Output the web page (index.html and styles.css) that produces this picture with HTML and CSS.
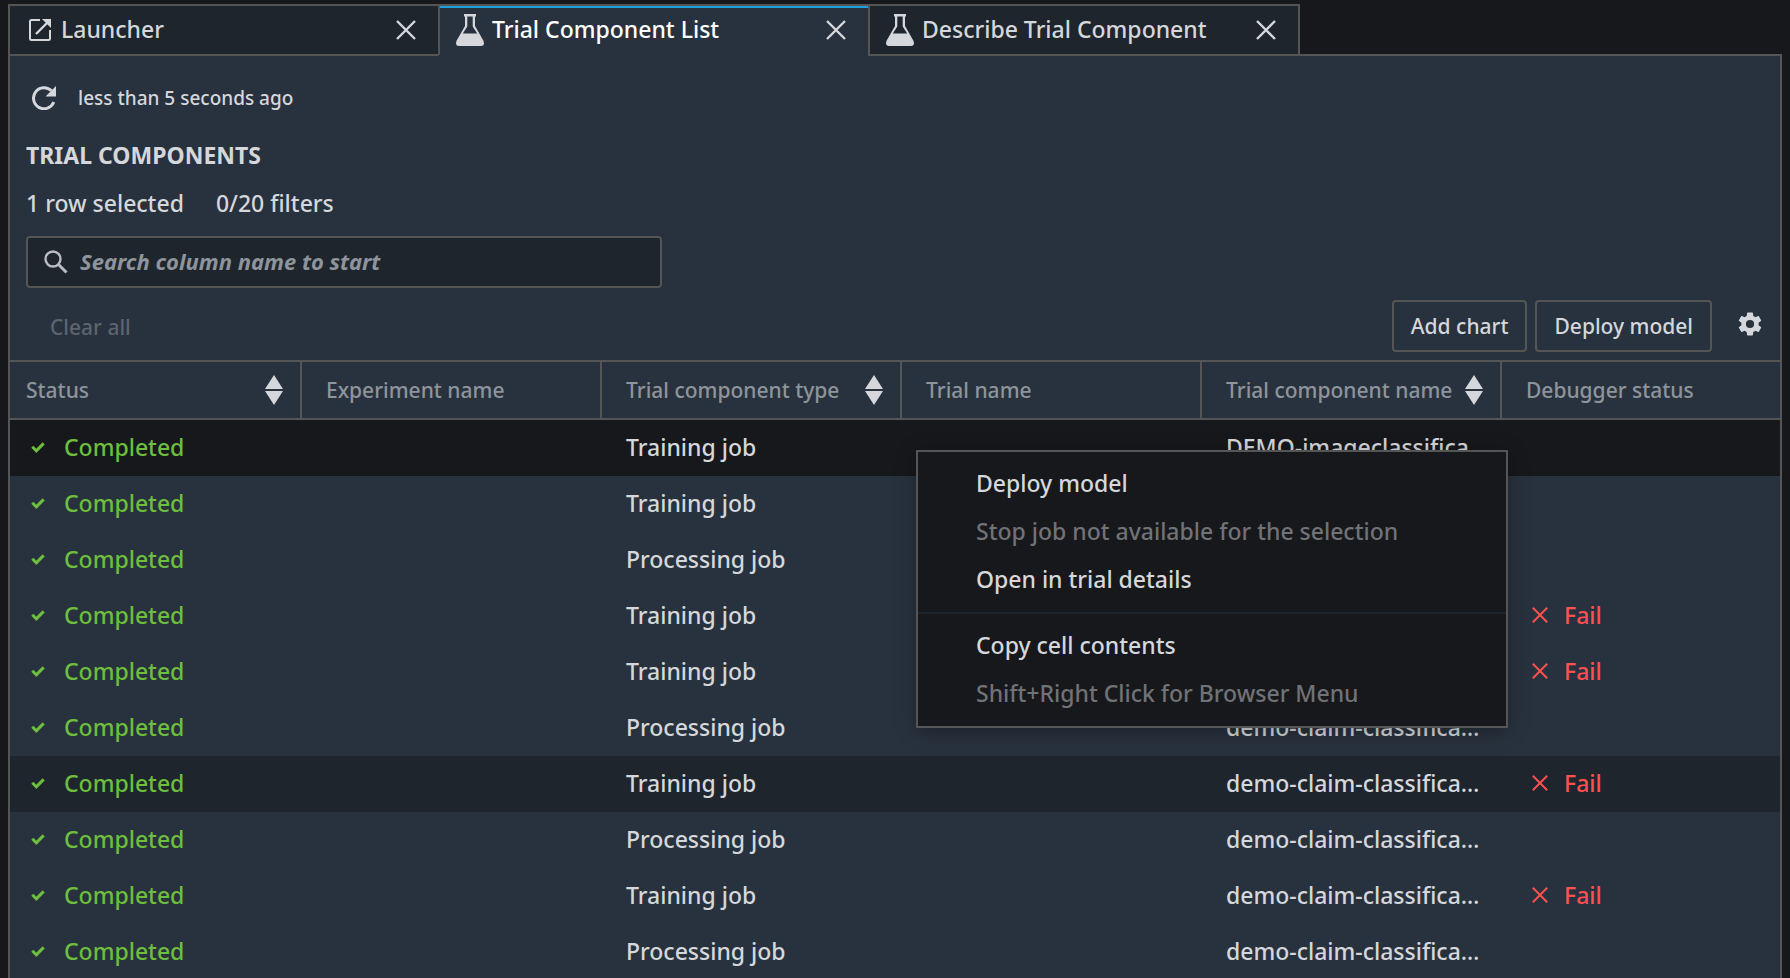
FILE: index.html
```html
<!DOCTYPE html>
<html lang="en">
<head>
<meta charset="utf-8">
<title>Trial Component List</title>
<meta name="viewport" content="width=device-width, initial-scale=1">
<link rel="stylesheet" href="styles.css">
</head>
<body>
<svg class="sprite" aria-hidden="true">
  <symbol id="i-close" viewBox="0 0 20 20"><path d="M1 1l18 18M19 1L1 19" fill="none" stroke="currentColor" stroke-width="2.4"/></symbol>
  <symbol id="i-flask" viewBox="0 0 28 32"><path fill="currentColor" fill-rule="evenodd" d="M8 0h12v2.500h-1V12l8.300 14.500Q28 28 28 29q0 3-3 3H3q-3 0-3-3 0-1 .7-2.500L9 12V2.500H8zM11.300 2.500V12.500L6.800 19.600h14.400l-4.500-7.100V2.500z"/></symbol>
  <symbol id="i-launch" viewBox="0 0 22 22"><path d="M11 1H2.500Q1 1 1 2.500v17Q1 21 2.500 21h17q1.500 0 1.500-1.500V11" fill="none" stroke="currentColor" stroke-width="2"/><path d="M18.500 3.500L7 15" fill="none" stroke="currentColor" stroke-width="2.400"/><path d="M13 0h9v9z" fill="currentColor"/></symbol>
  <symbol id="i-refresh" viewBox="0 0 24 24"><path d="M21.800 16A10.500 10.500 0 1 1 19.500 4.800" fill="none" stroke="currentColor" stroke-width="3"/><path d="M24 0v10.500H13.500z" fill="currentColor"/></symbol>
  <symbol id="i-search" viewBox="0 0 24 24"><circle cx="9" cy="9" r="7.500" fill="none" stroke="currentColor" stroke-width="2.400"/><path d="M14.500 14.500l8 8" stroke="currentColor" stroke-width="3"/></symbol>
  <symbol id="i-gear" viewBox="2 2 20 20"><path fill="currentColor" d="M19.140 12.940c.04-.3.06-.61.06-.94s-.02-.64-.07-.94l2.030-1.580c.18-.14.23-.41.12-.61l-1.920-3.320c-.12-.22-.37-.29-.59-.22l-2.390.96c-.5-.38-1.030-.7-1.620-.94l-.36-2.540c-.04-.24-.24-.41-.48-.41h-3.840c-.24 0-.43.17-.47.41l-.36 2.540c-.59.24-1.130.57-1.620.94l-2.390-.96c-.22-.08-.47 0-.59.22L2.740 8.870c-.12.21-.08.47.12.61l2.030 1.580c-.05.3-.09.63-.09.94s.02.64.07.94l-2.030 1.580c-.18.14-.23.41-.12.61l1.920 3.320c.12.22.37.29.59.22l2.390-.96c.5.38 1.030.7 1.620.94l.36 2.540c.05.24.24.41.48.41h3.840c.24 0 .44-.17.47-.41l.36-2.540c.59-.24 1.130-.56 1.620-.94l2.390.96c.22.08.47 0 .59-.22l1.920-3.320c.12-.22.07-.47-.12-.61zM12 15.400a3.400 3.400 0 1 1 0-6.800 3.400 3.400 0 0 1 0 6.800z"/></symbol>
  <symbol id="i-sort" viewBox="0 0 18 30"><path d="M9 0l9 14H0zM9 30l9-14H0z" fill="currentColor"/></symbol>
  <symbol id="i-check" viewBox="0 0 14 11"><path d="M1.300 4.800l4 4L12.700 1.400" fill="none" stroke="currentColor" stroke-width="3"/></symbol>
</svg>

<div class="shell">
  <nav class="tabs" aria-label="Open documents">
    <div class="tab">
      <svg class="icon-launch"><use href="#i-launch"/></svg>
      <button class="tab-label" type="button">Launcher</button>
      <button class="tab-close" type="button" aria-label="Close Launcher"><svg class="icon-close"><use href="#i-close"/></svg></button>
    </div>
    <div class="tab tab-active">
      <svg class="icon-flask"><use href="#i-flask"/></svg>
      <button class="tab-label" type="button">Trial Component List</button>
      <button class="tab-close" type="button" aria-label="Close Trial Component List"><svg class="icon-close"><use href="#i-close"/></svg></button>
    </div>
    <div class="tab">
      <svg class="icon-flask"><use href="#i-flask"/></svg>
      <button class="tab-label" type="button">Describe Trial Component</button>
      <button class="tab-close" type="button" aria-label="Close Describe Trial Component"><svg class="icon-close"><use href="#i-close"/></svg></button>
    </div>
    <div class="tabs-rest"></div>
  </nav>

  <main class="panel">
    <header class="head">
      <div class="refresh">
        <button class="plain" type="button" aria-label="Refresh"><svg class="icon-refresh"><use href="#i-refresh"/></svg></button>
        <span>less than 5 seconds ago</span>
      </div>
      <h1 class="title">TRIAL COMPONENTS</h1>
      <div class="counts"><span>1 row selected</span><span>0/20 filters</span></div>
      <label class="search">
        <svg class="icon-search"><use href="#i-search"/></svg>
        <input class="search-input" type="text" placeholder="Search column name to start" aria-label="Search column name to start">
      </label>
      <div class="actions">
        <button class="plain clear" type="button" disabled>Clear all</button>
        <button class="button" type="button">Add chart</button>
        <button class="button" type="button">Deploy model</button>
        <button class="plain gear" type="button" aria-label="Settings"><svg class="icon-gear"><use href="#i-gear"/></svg></button>
      </div>
    </header>

    <table class="grid">
      <colgroup><col class="col-status"><col class="col-std"><col class="col-std"><col class="col-std"><col class="col-std"><col></colgroup>
      <thead>
        <tr>
          <th scope="col"><div class="th">Status<svg class="icon-sort"><use href="#i-sort"/></svg></div></th>
          <th scope="col"><div class="th">Experiment name</div></th>
          <th scope="col"><div class="th">Trial component type<svg class="icon-sort"><use href="#i-sort"/></svg></div></th>
          <th scope="col"><div class="th">Trial name</div></th>
          <th scope="col"><div class="th">Trial component name<svg class="icon-sort"><use href="#i-sort"/></svg></div></th>
          <th scope="col"><div class="th">Debugger status</div></th>
        </tr>
      </thead>
      <tbody>
        <tr class="selected"><td><span class="ok"><svg class="icon-check"><use href="#i-check"/></svg>Completed</span></td><td></td><td>Training job</td><td></td><td>DEMO-imageclassifica…</td><td></td></tr>
        <tr><td><span class="ok"><svg class="icon-check"><use href="#i-check"/></svg>Completed</span></td><td></td><td>Training job</td><td></td><td></td><td></td></tr>
        <tr><td><span class="ok"><svg class="icon-check"><use href="#i-check"/></svg>Completed</span></td><td></td><td>Processing job</td><td></td><td></td><td></td></tr>
        <tr><td><span class="ok"><svg class="icon-check"><use href="#i-check"/></svg>Completed</span></td><td></td><td>Training job</td><td></td><td></td><td><span class="fail"><svg class="icon-fail"><use href="#i-close"/></svg>Fail</span></td></tr>
        <tr><td><span class="ok"><svg class="icon-check"><use href="#i-check"/></svg>Completed</span></td><td></td><td>Training job</td><td></td><td></td><td><span class="fail"><svg class="icon-fail"><use href="#i-close"/></svg>Fail</span></td></tr>
        <tr><td><span class="ok"><svg class="icon-check"><use href="#i-check"/></svg>Completed</span></td><td></td><td>Processing job</td><td></td><td>demo-claim-classifica…</td><td></td></tr>
        <tr class="hovered"><td><span class="ok"><svg class="icon-check"><use href="#i-check"/></svg>Completed</span></td><td></td><td>Training job</td><td></td><td>demo-claim-classifica…</td><td><span class="fail"><svg class="icon-fail"><use href="#i-close"/></svg>Fail</span></td></tr>
        <tr><td><span class="ok"><svg class="icon-check"><use href="#i-check"/></svg>Completed</span></td><td></td><td>Processing job</td><td></td><td>demo-claim-classifica…</td><td></td></tr>
        <tr><td><span class="ok"><svg class="icon-check"><use href="#i-check"/></svg>Completed</span></td><td></td><td>Training job</td><td></td><td>demo-claim-classifica…</td><td><span class="fail"><svg class="icon-fail"><use href="#i-close"/></svg>Fail</span></td></tr>
        <tr><td><span class="ok"><svg class="icon-check"><use href="#i-check"/></svg>Completed</span></td><td></td><td>Processing job</td><td></td><td>demo-claim-classifica…</td><td></td></tr>
      </tbody>
    </table>
  </main>
</div>

<div class="menu" role="menu">
  <button class="menu-item" type="button" role="menuitem">Deploy model</button>
  <button class="menu-item" type="button" role="menuitem" disabled>Stop job not available for the selection</button>
  <button class="menu-item" type="button" role="menuitem">Open in trial details</button>
  <hr class="menu-line">
  <button class="menu-item" type="button" role="menuitem">Copy cell contents</button>
  <button class="menu-item" type="button" role="menuitem" disabled>Shift+Right Click for Browser Menu</button>
</div>
</body>
</html>
```
FILE: styles.css
```css
:root {
  --ground: #17181c;
  --panel: #28323e;
  --deep: #1e252d;
  --line: #555555;
  --text: #d5d7db;
  --muted: #8e949c;
}

* { box-sizing: border-box; }

body {
  margin: 0;
  background: var(--ground);
  color: var(--text);
  font: 500 23px/32px "Noto Sans", "Open Sans", sans-serif;
}

button, input { font: inherit; color: inherit; }
svg { flex: none; display: block; }
.sprite { position: absolute; width: 0; height: 0; }

.shell {
  display: flex;
  flex-direction: column;
  height: 100vh;
  padding: 4px 8px 0;
  overflow: hidden;
}

/* Tabs */
.tabs { display: flex; flex: none; }
.tab {
  display: flex;
  align-items: center;
  flex: 0 1 430px;
  height: 52px;
  padding: 0 22px 0 16px;
  border: 2px solid var(--line);
  border-right-width: 0;
  background: var(--deep);
}
.tab:first-child { padding-left: 19px; }
.tab:nth-child(3) { flex-basis: 432px; border-right-width: 2px; }
.tab-active {
  border-bottom-color: var(--panel);
  background: var(--panel);
  box-shadow: inset 0 2px #1f9fdd;
  color: #ffffff;
}
.tab-active svg { color: var(--text); }
.tab-label, .tab-close, .plain {
  padding: 0;
  border: 0;
  background: none;
}
.tab-label { flex: 1; padding-bottom: 2px; margin-left: 8px; text-align: left; white-space: nowrap; }
.tab:first-child .tab-label { margin-left: 10px; }
.tabs-rest { flex: 1; border-bottom: 2px solid var(--line); }

/* Panel */
.panel {
  flex: 1;
  border: solid var(--line);
  border-width: 0 2px;
  background: var(--panel);
  overflow: hidden;
}
.head { padding: 24px 16px 8px; }
.refresh {
  display: flex;
  align-items: center;
  gap: 22px;
  height: 36px;
  padding-left: 6px;
  font-size: 19px;
}
.title { margin: 23px 0 0; font-size: 23px; line-height: 32px; font-weight: 700; }
.counts { display: flex; gap: 32px; margin-top: 16px; }
.search {
  display: flex;
  align-items: center;
  gap: 12px;
  max-width: 636px;
  height: 52px;
  margin-top: 17px;
  padding: 0 16px;
  border: 2px solid var(--line);
  border-radius: 4px;
  background: var(--deep);
}
.search-input {
  flex: 1;
  min-width: 0;
  padding: 0 0 2px;
  border: 0;
  outline: 0;
  background: none;
}
.search-input::placeholder { color: var(--muted); opacity: 1; font-weight: 700; font-style: italic; font-size: 22px; }
.actions { display: flex; align-items: center; gap: 8px; margin-top: 12px; font-size: 21px; }
.clear { margin: 2px auto 0 24px; color: #5c646e; }
.button {
  height: 52px;
  padding: 0 17px;
  border: 2px solid var(--line);
  border-radius: 4px;
  background: none;
  white-space: nowrap;
}
.gear { margin: 0 2px 4px 18px; }

/* Table */
.grid { width: 100%; table-layout: fixed; border-collapse: separate; border-spacing: 0; }
.col-status { width: 292px; }
.col-std { width: 300px; }
th {
  height: 60px;
  padding: 0 17px 0 24px;
  border: solid var(--line);
  border-width: 2px 2px 2px 0;
  color: var(--muted);
  font-size: 21px;
  font-weight: 500;
  text-align: left;
  white-space: nowrap;
}
th:last-child { border-right: 0; }
.th { display: flex; align-items: center; justify-content: space-between; }
td { height: 56px; padding: 0 0 2px 24px; white-space: nowrap; }
th:first-child, td:first-child { padding-left: 16px; }
.selected { background: var(--ground); }
.hovered { background: var(--deep); }
.ok, .fail { display: flex; align-items: center; gap: 19px; }
.ok { padding-left: 5px; color: #6cbe3c; }
.fail { gap: 16px; padding-left: 6px; color: #ff5050; }

/* Icons */
.icon-launch { width: 22px; height: 22px; }
.icon-flask { width: 28px; height: 32px; }
.icon-close { width: 20px; height: 20px; }
.icon-refresh { width: 24px; height: 24px; }
.icon-search { width: 24px; height: 24px; color: #b9bcc1; }
.icon-gear { width: 24px; height: 24px; }
.icon-sort { width: 18px; height: 30px; color: var(--text); }
.icon-check { width: 14px; height: 11px; }
.icon-fail { width: 16px; height: 16px; }

/* Context menu */
.menu {
  position: absolute;
  top: 450px;
  left: 916px;
  width: 592px;
  padding: 8px 0;
  border: 2px solid var(--line);
  background: var(--ground);
  box-shadow: 0 4px 20px rgba(0, 0, 0, 0.3);
}
.menu-item {
  display: block;
  width: 100%;
  height: 48px;
  padding: 0 0 2px 58px;
  border: 0;
  background: none;
  text-align: left;
  white-space: nowrap;
}
.menu-item:disabled { color: #707276; }
.menu-line { height: 2px; margin: 8px 0; border: 0; background: var(--deep); }
```
